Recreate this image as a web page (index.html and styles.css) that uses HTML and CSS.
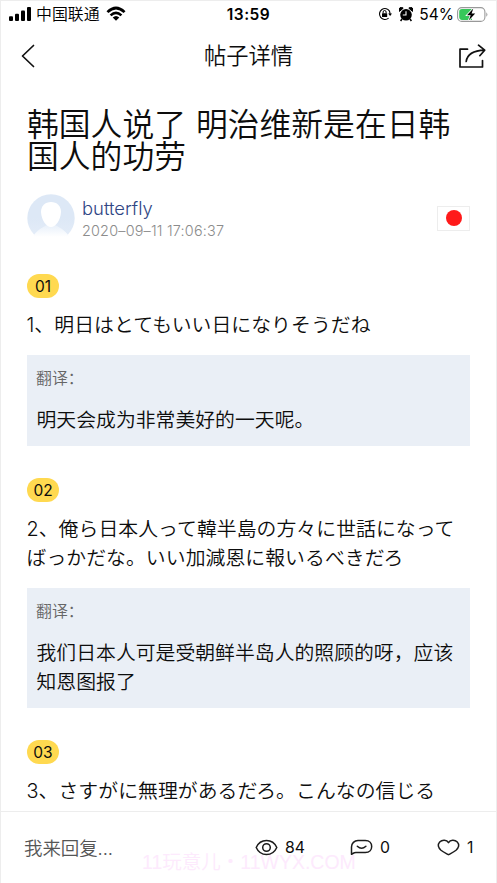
FILE: index.html
```html
<!DOCTYPE html>
<html lang="zh-CN">
<head>
<meta charset="utf-8">
<meta name="viewport" content="width=device-width">
<title>帖子详情</title>
<link rel="stylesheet" href="styles.css">
</head>
<body>
<div class="screen">
  <header class="status">
    <div class="status-left">
      <svg class="signal" width="22" height="14" viewBox="0 0 22 14"><rect x="0" y="9.3" width="4" height="4.7" rx="1"/><rect x="6" y="6.7" width="4" height="7.3" rx="1"/><rect x="12" y="3.5" width="4" height="10.5" rx="1"/><rect x="18" y="0" width="4" height="14" rx="1"/></svg>
      <span class="carrier">中国联通</span>
      <svg class="wifi" width="20" height="15" viewBox="0 0 20 15"><path d="M0.5 5.2Q10-4 19.5 5.2L17.6 7.1Q10-.3 2.4 7.1ZM3.7 8.5Q10 2.4 16.3 8.5L14.5 10.3Q10 6.2 5.5 10.3ZM6.7 11.5Q10 8.3 13.3 11.5L10 14.7Z"/></svg>
    </div>
    <time class="clock">13:59</time>
    <div class="status-right">
      <svg width="14" height="14" viewBox="0 0 14 14"><path d="M11.700 4.200A5.500 5.500 0 1 0 10.600 11.200M8.500 1.700A5.500 5.500 0 0 1 12 7" fill="none" stroke="#000" stroke-width="1.100"/><path d="M10.200 6.600H14L12.100 9Z"/><rect x="4" y="6.200" width="5.200" height="3.800" rx=".5"/><path d="M5.100 6.400V5a1.500 1.500 0 0 1 3 0V6.400" fill="none" stroke="#000"/></svg>
      <svg class="alarm" width="14" height="15" viewBox="0 0 14 15"><circle cx="7" cy="7.8" r="5.8"/><path d="M.5 4.400A2.200 2.200 0 0 1 4.200 1.200ZM13.500 4.400A2.200 2.200 0 0 0 9.800 1.200Z" stroke="#000"/><path d="M3 12 1.600 14M11 12l1.400 2" stroke="#000" stroke-width="1.500"/><path d="M7 4.200V8H3.800" fill="none" stroke="#fff" stroke-width="1.100"/></svg>
      <span class="percent">54%</span>
      <svg width="31" height="15" viewBox="0 0 31 15"><rect x=".6" y=".6" width="27.300" height="13.800" rx="4.200" fill="#fff" stroke="#999" stroke-width="1.100"/><path d="M5 2.100H15V12.900H5A2.800 2.800 0 0 1 2.200 10.100V4.900A2.800 2.800 0 0 1 5 2.100Z" fill="#36c75a"/><path d="M29.300 5.200Q31.500 7.500 29.300 9.800Z" fill="#999"/><path d="M16.300 1.500 10 8.300H13.700L11.700 13.500 18.200 6.600H14.600Z" stroke="#fff" stroke-width="1.600" paint-order="stroke"/></svg>
    </div>
  </header>
  <nav class="nav">
    <svg class="back" width="14" height="24" viewBox="0 0 14 24"><path d="M12.500 1.500 1.500 12 12.500 22.500"/></svg>
    <h1 class="nav-title">帖子详情</h1>
    <svg class="share" width="28" height="25" viewBox="0 0 28 25"><path d="M9.500 5.200H2V23H24.500V16.500M8.200 17.500Q9.700 6.800 26.500 6.200M20.500 1.200 26.700 6.200 21.800 11.700"/></svg>
  </nav>
  <main class="content">
    <h2 class="title">韩国人说了 明治维新是在日韩<br>国人的功劳</h2>
    <section class="author">
      <svg class="avatar" width="48" height="48" viewBox="0 0 48 48">
        <defs><linearGradient id="disc" x1="0" y1="0" x2="0" y2="1"><stop offset=".5" stop-color="#dde8f6"/><stop offset="1" stop-color="#e6eef9"/></linearGradient><linearGradient id="body" x1="0" y1="0" x2="0" y2="1"><stop offset="0" stop-color="#e8f0fa"/><stop offset=".7" stop-color="#fff"/></linearGradient></defs>
        <circle cx="24" cy="24" r="23.700" fill="url(#disc)"/><path d="M3 48C8 36 15 34 20 31H28C33 34 40 36 45 48Z" fill="url(#body)"/><path d="M24 8C30 8 34 12 34 18C33.500 26 29 33 24 33S14.500 26 14 18C14 12 18 8 24 8Z" fill="#fff"/>
      </svg>
      <div class="author-info"><span class="name">butterfly</span><time class="date">2020–09–11 17:06:37</time></div>
      <span class="flag"></span>
    </section>
    <article class="comment">
      <span class="badge">01</span>
      <p class="text" lang="ja">1、明日はとてもいい日になりそうだね</p>
      <div class="translation"><span class="label">翻译：</span><p class="text">明天会成为非常美好的一天呢。</p></div>
    </article>
    <article class="comment">
      <span class="badge">02</span>
      <p class="text" lang="ja">2、俺ら日本人って韓半島の方々に世話になって<br>ばっかだな。いい加減恩に報いるべきだろ</p>
      <div class="translation"><span class="label">翻译：</span><p class="text">我们日本人可是受朝鲜半岛人的照顾的呀，应该<br>知恩图报了</p></div>
    </article>
    <article class="comment">
      <span class="badge">03</span>
      <p class="text" lang="ja">3、さすがに無理があるだろ。こんなの信じる</p>
    </article>
  </main>
  <footer class="footer">
    <span class="reply">我来回复...</span>
    <span class="stat views"><svg width="23" height="17" viewBox="0 0 23 17"><path d="M1.200 8.500C3 4.500 7 1.500 11.500 1.500S20 4.500 21.800 8.500C20 12.500 16 15.500 11.500 15.500S3 12.500 1.200 8.500Z"/><circle cx="11.500" cy="8.500" r="3.800"/></svg>84</span>
    <span class="stat replies"><svg width="23" height="17" viewBox="0 0 23 17"><path d="M1.500 15.200V8A6.500 6.500 0 0 1 8 1.500H15.300C19.500 1.500 21.700 4.300 21.700 7.500S19.500 13.500 15.300 13.500H6C3.500 13.500 3 14.700 1.500 15.200ZM7.300 7.300Q11.600 11.200 15.900 7.300"/></svg>0</span>
    <span class="stat likes"><svg width="23" height="17" viewBox="0 0 23 17"><path d="M11.500 3.700C9.700.6 5.200.5 2.700 3C.2 5.700 1.200 8.700 4 11.200C6.500 13.300 9.500 14.500 11.500 15.700C13.500 14.500 16.500 13.300 19 11.200C21.800 8.700 22.800 5.700 20.300 3C17.800.5 13.300.6 11.500 3.700Z"/></svg>1</span>
    <span class="watermark">11玩意儿・11WYX.COM</span>
  </footer>
</div>
</body>
</html>
```
FILE: styles.css
```css
* { box-sizing: border-box; margin: 0; padding: 0; }
body {
  font-family: Inter, "Noto Sans CJK SC", sans-serif;
  font-weight: 350;
  color: #0d0d0d;
  background: #fff;
}
[lang="ja"] { font-family: Inter, "Noto Sans CJK JP", sans-serif; }
svg { display: block; flex: none; }
.screen {
  display: flex;
  flex-direction: column;
  height: 883px;
  overflow: hidden;
  border: 1px solid #ededed;
  border-bottom: 0;
  white-space: nowrap;
}
.status {
  display: grid;
  grid-template-columns: 1fr auto 1fr;
  align-items: center;
  height: 26px;
  padding: 0 8px;
  color: #000;
}
.status-left, .status-right { display: flex; align-items: center; }
.status-right { justify-content: flex-end; }
.carrier { margin: 0 6px 0 5px; padding-top: 2px; font-size: 15.900px; line-height: 20px; }
.wifi { margin-top: -1px; }
.clock { font-size: 15.500px; font-weight: 600; letter-spacing: .5px; }
.alarm { margin: 0 6px 0 7px; }
.percent { margin-right: 3px; font-size: 15.500px; font-weight: 400; }
.nav {
  display: grid;
  grid-template-columns: 1fr auto 1fr;
  align-items: center;
  height: 58px;
  padding: 0 10px 0 20px;
}
.back, .share { fill: none; stroke: #111; stroke-width: 1.700; stroke-linecap: round; stroke-linejoin: round; }
.share { justify-self: end; margin-top: 1px; }
.nav-title { margin-left: -10px; font-size: 22.300px; font-weight: 350; line-height: 30px; }
.content { flex: 1; min-height: 0; overflow: hidden; padding: 24px 26px 0; }
.title { font-size: 31.800px; font-weight: 350; line-height: 32px; word-spacing: 1px; }
.author { display: flex; align-items: center; height: 48px; margin-top: 21px; }
.author-info { flex: 1; display: flex; flex-direction: column; margin-left: 7px; padding-top: 2px; }
.name { color: #2f4684; font-size: 18.400px; line-height: 24px; }
.date { color: #8c8c8c; font-size: 14.400px; line-height: 22px; letter-spacing: .2px; }
.flag {
  display: grid;
  place-items: center;
  width: 33px;
  height: 25px;
  border: 1px solid #ededed;
}
.flag::before { content: ""; width: 16px; height: 16px; border-radius: 50%; background: #ff1a1a; }
.comment { margin-top: 32px; }
.badge {
  display: block;
  width: 32px;
  height: 24px;
  margin-bottom: 13px;
  border-radius: 12px;
  background: #ffd950;
  font-size: 15.500px;
  font-weight: 400;
  line-height: 26px;
  text-align: center;
}
.text { margin-left: -.5px; font-size: 19.850px; line-height: 29px; }
.comment > .text { letter-spacing: .05px; }
.translation { margin-top: 15px; padding: 14px 10px 11px; background: #eaeff6; }
.label { display: block; margin: 0 0 17px -1px; color: #666; font-size: 15.900px; line-height: 20px; }
.footer {
  position: relative;
  display: flex;
  align-items: center;
  height: 72px;
  padding: 0 22px 0 23px;
  border-top: 1px solid #ededed;
}
.reply { width: 231px; margin-top: -2px; color: #555; font-size: 18.500px; letter-spacing: -.1px; }
.stat { display: flex; align-items: center; gap: 7px; font-size: 15.800px; font-weight: 400; }
.stat svg { fill: none; stroke: #1c1c1c; stroke-width: 1.500; stroke-linejoin: round; stroke-linecap: round; }
.views { width: 95px; }
.replies { width: 87px; }
.watermark {
  position: absolute;
  left: 141px;
  top: 36px;
  z-index: -1;
  color: #fdeafd;
  font-family: "Liberation Sans", "Noto Sans CJK SC", sans-serif;
  font-size: 19.500px;
  line-height: 28px;
}
```
